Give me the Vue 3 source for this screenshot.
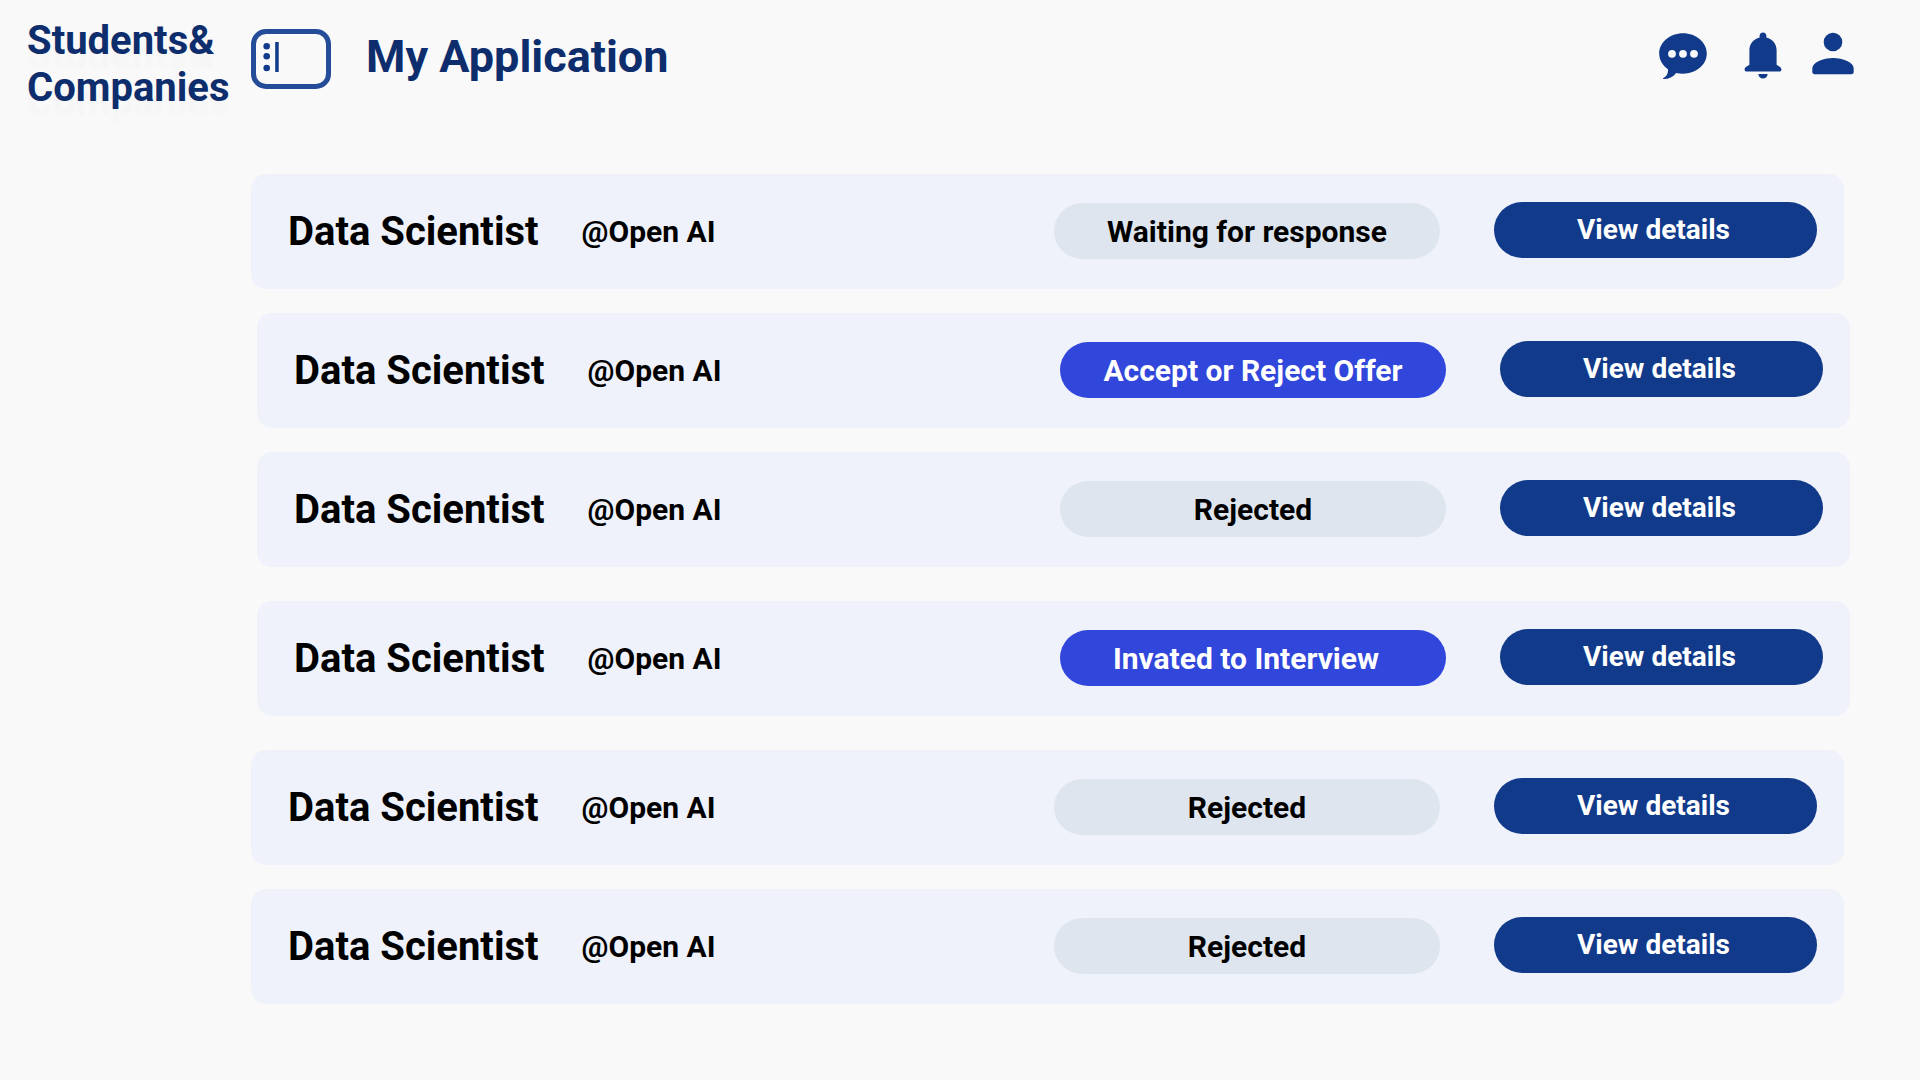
<script setup>
const applications = [
  { id: 1, role: 'Data Scientist', company: '@Open AI', status: 'Waiting for response', kind: 'passive' },
  { id: 2, role: 'Data Scientist', company: '@Open AI', status: 'Accept or Reject Offer', kind: 'action', shifted: true },
  { id: 3, role: 'Data Scientist', company: '@Open AI', status: 'Rejected', kind: 'passive', shifted: true },
  { id: 4, role: 'Data Scientist', company: '@Open AI', status: 'Invated to Interview', kind: 'action interview', shifted: true, spaced: true },
  { id: 5, role: 'Data Scientist', company: '@Open AI', status: 'Rejected', kind: 'passive', spaced: true },
  { id: 6, role: 'Data Scientist', company: '@Open AI', status: 'Rejected', kind: 'passive' },
]
</script>

<template>
  <div class="page">
    <header class="topbar">
      <a class="brand" href="#">Students&amp;<br />Companies</a>
      <button class="icon-button" type="button" aria-label="Toggle sidebar">
        <svg width="80" height="60" viewBox="0 0 80 60">
          <rect x="2.5" y="2.5" width="75" height="55" rx="12.5" fill="none" stroke="#244c99" stroke-width="5" />
          <g fill="#113a8a">
            <circle cx="15.7" cy="17.2" r="3.3" />
            <circle cx="15.7" cy="27.3" r="3.3" />
            <circle cx="15.7" cy="39" r="3.3" />
            <rect x="24.2" y="13" width="3.5" height="30" />
          </g>
        </svg>
      </button>
      <h1 class="title">My Application</h1>
      <nav class="tools" aria-label="Account">
        <button class="icon-button" type="button" aria-label="Messages">
          <svg width="48" height="48" viewBox="0 0 48 48">
            <path
              fill="#113a8a"
              fill-rule="evenodd"
              d="M24 1.2C10.8 1.2.2 10.3.2 21.6c0 6.400 3.400 12 8.900 15.800.1 3.800-1.300 6.600-4.700 8.600-.7.5-.4 1.100.4 1.100 5.200-.1 9-2 12.400-6.100 2.200.6 4.500.8 6.800.8 13.200 0 23.800-9 23.800-20.200S37.200 1.200 24 1.200ZM13 17.900a3.900 3.900 0 1 1 0 7.800 3.900 3.900 0 0 1 0-7.800Zm11 0a3.900 3.900 0 1 1 0 7.800 3.900 3.900 0 0 1 0-7.800Zm11 0a3.900 3.900 0 1 1 0 7.800 3.900 3.900 0 0 1 0-7.800Z"
            />
          </svg>
        </button>
        <button class="icon-button" type="button" aria-label="Notifications">
          <svg width="38" height="48" viewBox="0 0 38 48">
            <path
              fill="#113a8a"
              d="M19 .4c-2 0-3.400 1.500-3.400 3.400v1.700C9.600 7 5.400 12 5.400 18.200v14.600L2.300 34.700C1.200 35.400.6 36.300.6 37.400c0 1.300.9 2.200 2.300 2.200h32.200c1.400 0 2.300-.9 2.300-2.200 0-1.100-.6-2-1.700-2.700l-3.100-1.900V18.200C32.600 12 28.400 7 22.400 5.500V3.800C22.400 1.900 21 .4 19 .4ZM14.400 42h9.200c0 2.600-2 4.600-4.600 4.600s-4.600-2-4.600-4.600Z"
            />
          </svg>
        </button>
        <button class="icon-button" type="button" aria-label="Profile">
          <svg width="42" height="48" viewBox="0 0 42 48">
            <g fill="#113a8a">
              <circle cx="21" cy="10" r="9.3" />
              <path d="M21 26C11 26 .3 30.300.3 36.500v3.200c0 1.500.9 2.500 2.400 2.500h36.600c1.500 0 2.400-1 2.400-2.500v-3.200C41.700 30.300 31 26 21 26Z" />
            </g>
          </svg>
        </button>
      </nav>
    </header>

    <main>
      <ul class="applications">
        <li
          v-for="item in applications"
          :key="item.id"
          class="card"
          :class="{ shifted: item.shifted, spaced: item.spaced }"
        >
          <h2 class="role">{{ item.role }}</h2>
          <span class="company">{{ item.company }}</span>
          <span v-if="item.kind === 'passive'" class="status">{{ item.status }}</span>
          <button v-else class="status" :class="item.kind" type="button">{{ item.status }}</button>
          <button class="details" type="button">View details</button>
        </li>
      </ul>
    </main>
  </div>
</template>

<style>
body {
  margin: 0;
  background: #f9f9f9;
}
</style>

<style scoped>
.page {
  min-height: 100vh;
  font-family: Roboto, 'Liberation Sans', sans-serif;
  font-weight: 700;
  color: #000;
}

button {
  padding: 0;
  border: 0;
  font: inherit;
  cursor: pointer;
}

.topbar {
  display: flex;
  align-items: flex-start;
  padding: 17px 66px 0 27px;
}

.brand {
  flex: none;
  width: 224px;
  color: #0d2d6c;
  font-size: 40px;
  line-height: 47px;
  text-decoration: none;
  text-shadow: 0 14px 4px rgba(0, 0, 0, 0.02);
}

.icon-button {
  display: block;
  flex: none;
  background: none;
}

.icon-button svg {
  display: block;
}

.topbar > .icon-button {
  margin-top: 12px;
}

.title {
  margin: 12px 0 0 35px;
  color: #0d2d6c;
  font-size: 45px;
  line-height: 56px;
}

.tools {
  display: flex;
  gap: 37px;
  margin: 15px 0 0 auto;
}

.tools .icon-button:last-child {
  margin-left: -7px;
}

.applications {
  display: flex;
  flex-direction: column;
  gap: 24px;
  margin: 0;
  padding: 63px 76px 76px 251px;
  list-style: none;
}

.card {
  display: flex;
  align-items: center;
  box-sizing: border-box;
  min-height: 115px;
  padding: 0 27px 0 37px;
  border-radius: 15px;
  background: #eff2fa;
}

.shifted {
  margin-right: -6px;
  margin-left: 6px;
}

.spaced {
  margin-top: 10px;
}

.role {
  margin: 0;
  font-size: 40px;
  line-height: 49px;
}

.company {
  margin-left: 43px;
  font-size: 30px;
  line-height: 36px;
}

.status,
.details {
  flex: none;
  box-sizing: border-box;
  height: 56px;
  border-radius: 28px;
  text-align: center;
}

.status {
  width: 386px;
  margin: 0 54px 1px auto;
  padding-top: 2px;
  background: #dee5ee;
  font-size: 30px;
  line-height: 54px;
}

.action {
  background: #3146db;
  color: #fff;
}

.interview {
  padding-right: 14px;
}

.details {
  width: 323px;
  margin-bottom: 3px;
  padding-right: 4px;
  background: #113a8a;
  color: #fff;
  font-size: 28px;
  line-height: 56px;
}
</style>
